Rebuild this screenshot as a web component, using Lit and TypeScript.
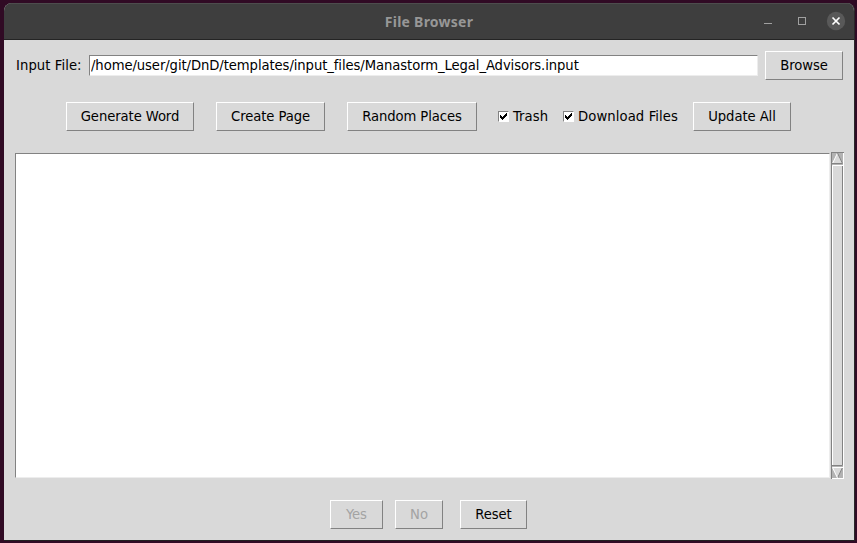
import { LitElement, html, css } from "lit";
import { customElement, property } from "lit/decorators.js";

@customElement("tk-button")
class TkButton extends LitElement {
  @property({ type: Boolean, reflect: true }) disabled = false;
  static styles = css`
    :host { display: block; flex: none; box-sizing: border-box; height: 29px; }
    button {
      display: block; width: 100%; height: 100%; margin: 0; padding: 0 0 1px;
      box-sizing: border-box; background: #d9d9d9; color: #000;
      border: 1px solid; border-color: #fff #828282 #828282 #fff; border-radius: 0;
      font: inherit; letter-spacing: inherit; white-space: nowrap; text-align: center;
    }
    button:disabled { color: #a3a3a3; }
  `;
  render() {
    return html`<button ?disabled=${this.disabled}><slot></slot></button>`;
  }
}

@customElement("tk-check")
class TkCheck extends LitElement {
  static styles = css`
    :host { display: flex; align-items: center; flex: none; white-space: nowrap; height: 29px; }
    .box {
      width: 11px; height: 11px; box-sizing: border-box; background: #fff; flex: none;
      border: 1px solid; border-color: #828282 #fff #fff #828282; margin-right: 4px;
    }
    svg { display: block; }
    .text { padding-bottom: 1px; letter-spacing: 0.1px; }
  `;
  render() {
    return html`<span class="box"><svg width="9" height="9" viewBox="0 0 9 9" shape-rendering="crispEdges">
      <path fill="#000" d="M1 3h1v1h1v1h1v-1h1v-1h1v-1h1v-1h1v3h-1v1h-1v1h-1v1h-1v1h-1v-1h-1v-1h-1z"/></svg></span>
      <span class="text"><slot></slot></span>`;
  }
}

@customElement("app-root")
class AppRoot extends LitElement {
  static styles = css`
    :host {
      display: block; box-sizing: border-box; width: 857px; height: 543px; overflow: hidden;
      padding: 3px 2px 2px 4px; background: #300a24; color: #000;
      font: 14.667px/20px "DejaVu Sans Condensed", "DejaVu Sans", sans-serif; font-stretch: condensed;
      letter-spacing: -0.08px;
    }
    .window { height: 538px; box-sizing: border-box; background: #d9d9d9; border-radius: 8px 8px 0 0;
      overflow: hidden; border-bottom: 1px solid #202020; border-right: 1px solid #282828; }
    .title { height: 37px; box-sizing: border-box; background: #3e3e3e; border-top: 1px solid #4d4d4d;
      border-bottom: 1px solid #242424; display: grid; grid-template-columns: 1fr auto 1fr; align-items: center; }
    .name { grid-column: 2; color: #979797; font: bold 14px/20px "Noto Sans", sans-serif; font-stretch: normal; letter-spacing: 0.25px; }
    .controls { justify-self: end; display: block; }
    .row { display: flex; }
    .file { padding: 11px 0 0 12px; height: 30px; }
    .file label { width: 73px; padding-top: 4px; white-space: nowrap; letter-spacing: 0.08px; }
    .entry { width: 669px; height: 21px; box-sizing: border-box; background: #fff; padding: 0 1px 2px;
      border: 1px solid; border-color: #828282 #ededed #ededed #828282; margin: 4px 7px 0 0;
      font: inherit; line-height: 17px; letter-spacing: inherit; color: #000; outline: 0; border-radius: 0; }
    .actions { padding: 21px 0 0 62px; height: 30px; }
    .output { padding: 20px 0 0 11px; height: 327px; }
    .text { width: 815px; height: 325px; margin: 1px 1px 0 0; box-sizing: border-box; background: #fff;
      border: 1px solid; border-color: #828282 #ededed #ededed #828282; }
    .scroll { display: block; }
    .answers { padding: 21px 0 0 326px; }
    .w-browse { width: 78px; } .w-word { width: 128px; margin-right: 22px; }
    .w-page { width: 109px; margin-right: 22px; } .w-places { width: 130px; margin-right: 21px; }
    .trash { width: 65px; } .files { width: 130px; }
    .w-update { width: 98px; }
    .w-yes { width: 53px; margin-right: 12px; } .w-no { width: 48px; margin-right: 17px; } .w-reset { width: 67px; }
  `;
  render() {
    return html`<div class="window">
      <div class="title"><span class="name">File Browser</span>
        <svg class="controls" width="100" height="35" viewBox="0 0 100 35">
          <path d="M10 19.5h8" stroke="#a0a0a0"/>
          <rect x="44.5" y="13.5" width="7" height="7" fill="none" stroke="#a0a0a0"/>
          <circle cx="82" cy="17" r="9.2" fill="#595959"/>
          <path d="M78.500 13.500l7 7M85.500 13.500l-7 7" stroke="#fff" stroke-width="1.7"/>
        </svg></div>
      <div class="row file"><label>Input File:</label>
        <input class="entry" .value=${"/home/user/git/DnD/templates/input_files/Manastorm_Legal_Advisors.input"} spellcheck="false">
        <tk-button class="w-browse">Browse</tk-button></div>
      <div class="row actions">
        <tk-button class="w-word">Generate Word</tk-button>
        <tk-button class="w-page">Create Page</tk-button>
        <tk-button class="w-places">Random Places</tk-button>
        <tk-check class="trash">Trash</tk-check>
        <tk-check class="files">Download Files</tk-check>
        <tk-button class="w-update">Update All</tk-button></div>
      <div class="row output"><div class="text"></div>
        <svg class="scroll" width="13" height="327" viewBox="0 0 13 327">
          <path fill="#b3b3b3" d="M0 0h13v327H0z"/>
          <path fill="#828282" d="M0 0h13v1H1v326H0z"/>
          <path fill="#fff" d="M12 1h1v326H1v-1h11z"/>
          <path fill="#d9d9d9" d="M6.500 1L12 12H1z"/>
          <path fill="none" stroke="#fff" d="M6.500 1L1.500 11.500"/>
          <path fill="none" stroke="#828282" stroke-linejoin="bevel" d="M6.500 1L11.500 11.500H1"/>
          <path fill="#d9d9d9" d="M1 13h11v301H1z"/>
          <path fill="none" stroke="#fff" d="M1.500 314V13.500H12"/>
          <path fill="none" stroke="#828282" d="M11.500 14v299.500H1"/>
          <path fill="#d9d9d9" d="M1 315h11L6.500 326z"/>
          <path fill="none" stroke="#828282" d="M11.500 315.500L6.500 326"/>
          <path fill="none" stroke="#fff" stroke-linejoin="bevel" d="M12 315.500H1.500L6.500 326"/>
        </svg></div>
      <div class="row answers">
        <tk-button class="w-yes" disabled>Yes</tk-button>
        <tk-button class="w-no" disabled>No</tk-button>
        <tk-button class="w-reset">Reset</tk-button></div>
    </div>`;
  }
}
